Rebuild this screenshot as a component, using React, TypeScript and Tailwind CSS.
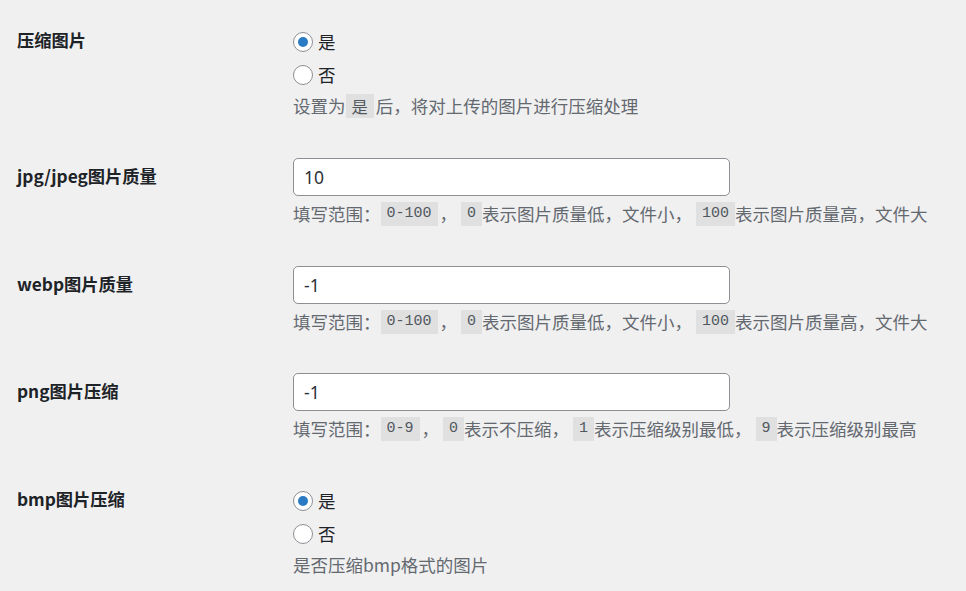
import React from "react";

const FONT = '"Noto Sans CJK SC", "Noto Sans", sans-serif';
const LATIN = '"Noto Sans", "Noto Sans CJK SC", sans-serif';
const MONO = '"Liberation Mono", "DejaVu Sans Mono", monospace';

function Code({ children, cjk }: { children: React.ReactNode; cjk?: boolean }) {
  return (
    <code
      className={`inline-block h-[24px] px-[6px] bg-[#e0e0e1] leading-[24px] align-middle text-[#50575e] ${cjk ? "text-[16.25px]" : "text-[15px]"}`}
      style={{ fontFamily: cjk ? FONT : MONO }}
    >
      {children}
    </code>
  );
}

function Sp() {
  return <span className="inline-block w-[4px]" />;
}

function Radio({ checked, label, first }: { checked?: boolean; label: string; first?: boolean }) {
  return (
    <div className={`flex items-center h-[24px] ${first ? "" : "mt-[9px]"}`}>
      <span className="w-[20px] h-[20px] rounded-full border border-[#8c8f94] bg-white flex items-center justify-center mr-[5px] shrink-0">
        {checked && <span className="w-[10px] h-[10px] rounded-full bg-[#2b7bc4]" />}
      </span>
      <span className="text-[17.5px] text-[#1d2327] leading-[24px]">{label}</span>
    </div>
  );
}

function Desc({ children, mt }: { children: React.ReactNode; mt: string }) {
  return (
    <div className={`${mt} h-[24px] flex items-center text-[17.5px] text-[#646970] leading-[24px] whitespace-nowrap`}>
      {children}
    </div>
  );
}

function Label({ children }: { children: React.ReactNode }) {
  return (
    <div className="w-[276px] -ml-[2px] shrink-0 pt-[25px] text-[17.25px] leading-[23px] font-bold text-[#1d2327]">
      {children}
    </div>
  );
}

function Input({ value }: { value: string }) {
  return (
    <div
      className="w-[437px] h-[38px] bg-white border border-[#8c8f94] rounded-[5px] flex items-center pl-[10px] text-[17.5px] text-[#2c3338]"
      style={{ fontFamily: LATIN }}
    >
      {value}
    </div>
  );
}

function RadioRow({ label, desc, h }: { label: string; desc: React.ReactNode; h: string }) {
  return (
    <div className={`flex ${h}`}>
      <Label>{label}</Label>
      <div className="pt-[27px]">
        <Radio checked label="是" first />
        <Radio label="否" />
        <Desc mt="mt-[7px]">{desc}</Desc>
      </div>
    </div>
  );
}

function InputRow({ label, value, desc, h }: { label: string; value: string; desc: React.ReactNode; h: string }) {
  return (
    <div className={`flex ${h}`}>
      <Label>{label}</Label>
      <div className="pt-[19px]">
        <Input value={value} />
        <Desc mt="mt-[6px]">{desc}</Desc>
      </div>
    </div>
  );
}

const quality = (
  <>
    <span>填写范围：</span>
    <Code>0-100</Code>
    <span className="ml-[2px]">，</span>
    <Sp />
    <Code>0</Code>
    <span>表示图片质量低，文件小，</span>
    <Sp />
    <Code>100</Code>
    <span>表示图片质量高，文件大</span>
  </>
);

export default function App() {
  return (
    <div className="min-h-screen w-full bg-[#f0f0f1] pt-[3px] pl-[19px]" style={{ fontFamily: FONT }}>
      <RadioRow
        label="压缩图片"
        h="h-[136px]"
        desc={
          <>
            <span>设置为</span>
            <Code cjk>是</Code>
            <span className="ml-[2px]">后，将对上传的图片进行压缩处理</span>
          </>
        }
      />
      <InputRow label="jpg/jpeg图片质量" value="10" h="h-[108px]" desc={quality} />
      <InputRow label="webp图片质量" value="-1" h="h-[107px]" desc={quality} />
      <InputRow
        label="png图片压缩"
        value="-1"
        h="h-[108px]"
        desc={
          <>
            <span>填写范围：</span>
            <Code>0-9</Code>
            <span className="ml-[2px]">，</span>
            <Sp />
            <Code>0</Code>
            <span>表示不压缩，</span>
            <Sp />
            <Code>1</Code>
            <span>表示压缩级别最低，</span>
            <Sp />
            <Code>9</Code>
            <span>表示压缩级别最高</span>
          </>
        }
      />
      <RadioRow label="bmp图片压缩" h="h-[130px]" desc={<span>是否压缩bmp格式的图片</span>} />
    </div>
  );
}
